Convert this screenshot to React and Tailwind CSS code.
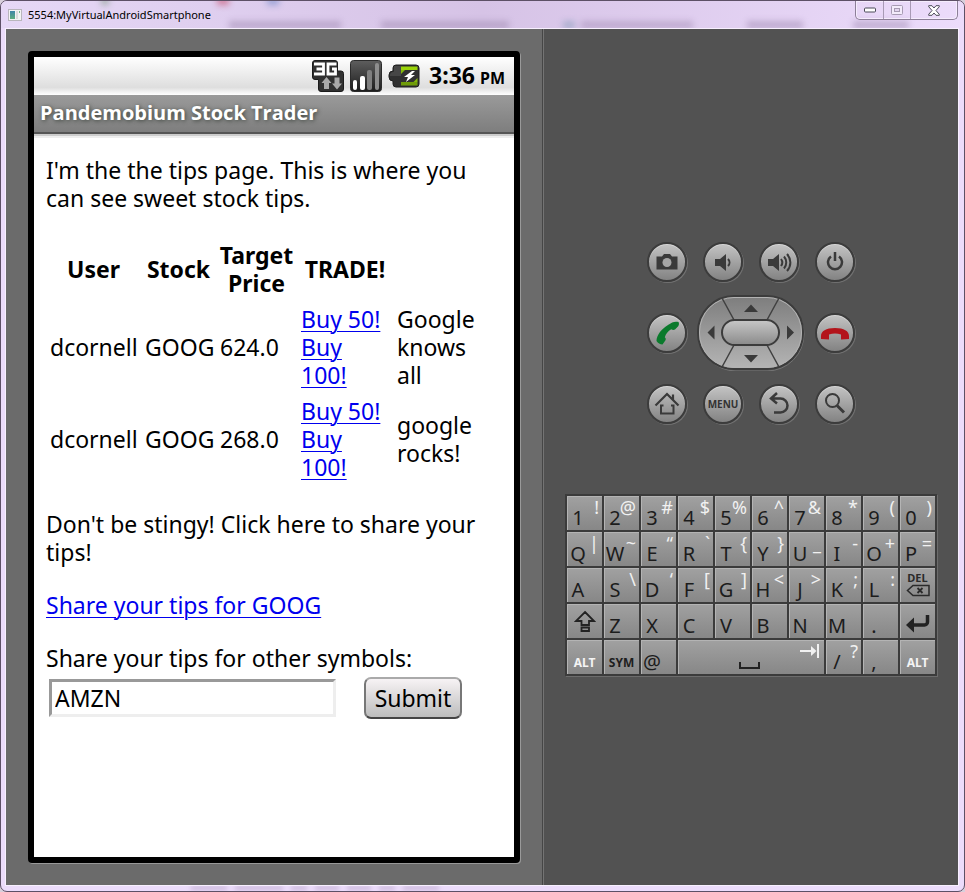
import React from "react";

const droid = "font-['Noto_Sans','Open_Sans',sans-serif]";
const droidWide = "font-['Open_Sans','Noto_Sans',sans-serif]";

function AppIcon() {
  return (
    <svg width="14" height="14" viewBox="0 0 14 14" aria-hidden="true">
      <defs>
        <linearGradient id="app" x1="0" y1="0" x2="0" y2="1">
          <stop offset="0" stopColor="#3f86a8" />
          <stop offset="1" stopColor="#5fae7e" />
        </linearGradient>
      </defs>
      <rect x="0.5" y="1.5" width="13" height="11" fill="#f4f4f4" stroke="#b9b6bd" />
      <rect x="2" y="3" width="5" height="8" fill="url(#app)" />
      <rect x="8" y="3" width="2" height="8" fill="#dcdcdc" />
      <rect x="11" y="3" width="1" height="2" fill="#7cb98c" />
    </svg>
  );
}

function TitleBar() {
  return (
    <header className="relative flex h-[27px] items-start justify-between overflow-hidden bg-linear-to-r from-[#e6d8f6] via-[#d6c3e6] to-[#ecdcfb]">
      <div aria-hidden="true" className="absolute inset-0 opacity-50 blur-[3px]">
        <div className="absolute top-[20px] left-[228px] h-2 w-28 bg-[#9c86ad]" />
        <div className="absolute top-[20px] left-[380px] h-2 w-32 bg-[#9c86ad]" />
        <div className="absolute top-[20px] left-[562px] h-2 w-3 bg-[#7f97b4]" />
        <div className="absolute top-[20px] left-[580px] h-2 w-28 bg-[#a28cb3]" />
        <div className="absolute top-[20px] left-[746px] h-2 w-14 bg-[#9c86ad]" />
        <div className="absolute top-[20px] left-[852px] h-2 w-14 bg-[#9c86ad]" />
        <div className="absolute -top-1 left-[216px] h-2 w-3 bg-[#c2304f]" />
        <div className="absolute -top-1 left-[100px] h-2 w-2 bg-[#6a8f6a]" />
        <div className="absolute -top-1 left-[266px] h-2 w-3 bg-[#5a7ac0]" />
      </div>
      <div className="relative flex h-[27px] items-center gap-[6px] pl-[7px]">
        <AppIcon />
        <h1 className={`${droid} text-[11px] leading-4 text-black`}>5554:MyVirtualAndroidSmartphone</h1>
      </div>
      <div className="relative mr-[6px] flex h-[19px] rounded-b-[5px] border border-t-0 border-[#8c7f98] shadow-[inset_0_0_0_1px_#f5ecfd]">
        <button type="button" aria-label="Minimize" className="flex w-7 items-center justify-center border-r border-[#a89ab5]">
          <svg width="12" height="6" viewBox="0 0 12 6"><rect x="0.5" y="1" width="11" height="4" rx="1" fill="#fff" stroke="#4b4a58" /></svg>
        </button>
        <button type="button" aria-label="Maximize" className="flex w-[27px] items-center justify-center border-r border-[#a89ab5]">
          <svg width="12" height="10" viewBox="0 0 12 10" fill="#f3ebfb" stroke="#a79bb3"><rect x="0.5" y="0.5" width="11" height="9" rx="1" /><rect x="3.5" y="3.5" width="5" height="3" fill="#e3d5f0" /></svg>
        </button>
        <button type="button" aria-label="Close" className="flex w-[46px] items-center justify-center">
          <svg width="12" height="11" viewBox="0 0 12 11"><path d="M.7.7H4L6 3l2-2.3h3.3v1L8 5.5l3.3 3.8v1H8L6 8l-2 2.300H.7v-1L4 5.500.7 1.700z" fill="#fff" stroke="#4b4a58" /></svg>
        </button>
      </div>
    </header>
  );
}

function StatusBar() {
  return (
    <div className="flex h-[38px] items-center justify-end gap-[6px] bg-linear-to-b from-white via-[#dedede] via-80% to-white pr-[9px]">
      <svg width="32" height="32" viewBox="0 0 32 32" role="img" aria-label="3G data">
        <path d="M3 .5h20a2.500 2.500 0 0 1 2.500 2.500v8h3.500a2.500 2.500 0 0 1 2.500 2.500V29a2.500 2.500 0 0 1-2.500 2.500H9A2.500 2.500 0 0 1 6.500 29v-9.500H3A2.500 2.500 0 0 1 .5 17V3A2.500 2.500 0 0 1 3 .5z" fill="#303030" stroke="#1b1b1b" />
        <path d="M2 4h9.500v10H2M4.500 9h7M24.500 4H16v10h7.500V9H20" fill="none" stroke="#fff" strokeWidth="2.800" />
        <path d="M14.500 17l5 6H17v6h-5v-6H9.500zM25 29.500l-5-6h2.500v-6h5v6H30z" fill="#a9a9a9" />
      </svg>
      <svg width="32" height="32" viewBox="0 0 32 32" role="img" aria-label="Signal strength">
        <defs><linearGradient id="sig" x1="0" y1="0" x2="0" y2="1"><stop offset="0" stopColor="#5e5e5e" /><stop offset="1" stopColor="#1c1c1c" /></linearGradient></defs>
        <rect x=".5" y=".5" width="31" height="31" rx="3" fill="url(#sig)" stroke="#2b2b2b" />
        <rect x="3" y="20" width="4" height="10" rx="2" fill="#fff" />
        <rect x="10" y="16" width="5" height="14" rx="2" fill="#fff" />
        <rect x="17" y="10" width="5" height="20" rx="2" fill="#808080" />
        <rect x="25" y="3" width="4" height="27" rx="2" fill="#8e8e8e" />
      </svg>
      <svg width="32" height="24" viewBox="0 0 32 24" role="img" aria-label="Battery charging">
        <path d="M8 1h20a3 3 0 0 1 3 3v16a3 3 0 0 1-3 3H8a3 3 0 0 1-3-3v-3a4 4 0 0 1-4-4v-2a4 4 0 0 1 4-4V4a3 3 0 0 1 3-3z" fill="#303030" stroke="#1f1f1f" />
        <path d="M6 2h7v10H2c0-3 1-4 4-4z" fill="#555" opacity=".6" />
        <path d="M13 2.500h16.500V6H13z" fill="#9ad30a" />
        <path d="M13 18h16.500v3.500H13z" fill="#6f9c08" />
        <path d="M13 6h4l-4 4zM29.500 18h-4l4-4z" fill="#84b80a" />
        <path d="M24 7l-8 6h4l-2 5 9-7h-4l4-4z" fill="#fff" />
      </svg>
      <time className="flex items-baseline gap-[5px] pl-[3px] font-['Noto_Sans',sans-serif] text-[23px] leading-[38px] font-bold text-black">
        3:36 <span className="text-[16px]">PM</span>
      </time>
    </div>
  );
}

const tips = [
  { user: "dcornell", stock: "GOOG", price: "624.0", note: "Google knows all" },
  { user: "dcornell", stock: "GOOG", price: "268.0", note: "google rocks!" },
];
const linkClass = "text-[#0000ee] underline decoration-1 underline-offset-3";

function Page() {
  return (
    <main className={`${droid} flex flex-col gap-[25px] px-3 pt-[22px] text-[23px] leading-7 text-black`}>
      <p>I'm the the tips page. This is where you<br />can see sweet stock tips.</p>
      <table className="w-full table-fixed border-collapse">
        <colgroup>
          <col className="w-[95px]" /><col className="w-[75px]" /><col className="w-[81px]" /><col className="w-[96px]" /><col />
        </colgroup>
        <thead>
          <tr className="whitespace-nowrap">
            <th className="py-1">User</th>
            <th className="py-1">Stock</th>
            <th className="py-1">Target<br />Price</th>
            <th className="py-1">TRADE!</th>
            <td />
          </tr>
        </thead>
        <tbody>
          {tips.map((t) => (
            <tr key={t.price}>
              <td className="px-1 py-1 whitespace-nowrap">{t.user}</td>
              <td className="px-1 py-1 whitespace-nowrap">{t.stock}</td>
              <td className="px-1 py-1">{t.price}</td>
              <td className="py-1 pl-1">
                <a href="#buy50" className={linkClass}>Buy 50!</a><br />
                <a href="#buy100" className={linkClass}>Buy<br />100!</a>
              </td>
              <td className="py-1 pr-6 pl-1">{t.note}</td>
            </tr>
          ))}
        </tbody>
      </table>
      <p>Don't be stingy! Click here to share your<br />tips!</p>
      <p><a href="#share" className={linkClass}>Share your tips for GOOG</a></p>
      <form onSubmit={(e) => e.preventDefault()}>
        <label htmlFor="symbol" className="block">Share your tips for other symbols:</label>
        <div className="flex items-center gap-7 pt-[5px] pl-[3px]">
          <input id="symbol" defaultValue="AMZN" className="h-[38px] w-[287px] border-3 border-t-[#999] border-r-[#eee] border-b-[#eee] border-l-[#999] bg-white px-[3px] outline-none" />
          <button type="submit" className="h-[42px] w-[98px] rounded-[7px] border-2 border-t-[#aaa] border-r-[#777] border-b-[#444] border-l-[#777] bg-linear-to-b from-[#f7f3f5] to-[#bdbdbd]">Submit</button>
        </div>
      </form>
    </main>
  );
}

function Phone() {
  return (
    <section aria-label="Phone screen" className="flex w-[492px] shrink-0 flex-col rounded-[4px] border-6 border-black bg-white shadow-[1px_1px_0_#999]">
      <StatusBar />
      <div className="h-[39px] border-b-2 border-[#555] bg-linear-to-b from-[#9a9a9a] to-[#7e7e7e] pl-[6px] shadow-[0_2px_0_#ccc,0_4px_0_#eee]">
        <h2 className={`${droidWide} text-[20px] leading-9 font-bold text-white [text-shadow:1px_1px_4px_#3b423b]`}>Pandemobium Stock Trader</h2>
      </div>
      <Page />
    </section>
  );
}

function Round({ label, children }) {
  return (
    <button type="button" aria-label={label} className="flex size-10 items-center justify-center rounded-full border-2 border-[#3c3c3c] bg-linear-to-b from-[#c4c4c4] to-[#838383] shadow-[1px_1px_0_#717171,inset_0_1px_0_#d8d8d8]">
      {children}
    </button>
  );
}

function Icon({ children }) {
  return (
    <svg width="28" height="28" viewBox="0 0 28 28" fill="none" stroke="#3a3a3a" strokeWidth="2" className="shrink-0" aria-hidden="true">
      {children}
    </svg>
  );
}

function DPad() {
  return (
    <svg width="108" height="76" viewBox="0 0 108 76" role="group" aria-label="Direction pad" className="col-span-2">
      <defs>
        <linearGradient id="pad" x1="0" y1="0" x2="0" y2="1"><stop offset="0" stopColor="#7d7d7d" /><stop offset="1" stopColor="#b5b5b5" /></linearGradient>
        <linearGradient id="ok" x1="0" y1="0" x2="0" y2="1"><stop offset="0" stopColor="#c8c8c8" /><stop offset="1" stopColor="#8a8a8a" /></linearGradient>
      </defs>
      <rect x="2" y="2" width="105" height="74" rx="37" fill="none" stroke="#747474" />
      <rect x="1" y="1" width="105" height="73" rx="36" fill="url(#pad)" stroke="#3c3c3c" strokeWidth="2" />
      <rect x="2.500" y="2.500" width="102" height="70" rx="34.500" fill="none" stroke="#b3b3b3" />
      <path d="M25 3l12 22M82 3L70 25M25 72l12-22M82 72L70 50" stroke="#404040" strokeWidth="1.500" />
      <rect x="25" y="25" width="57" height="25" rx="12.500" fill="url(#ok)" stroke="#3c3c3c" strokeWidth="2" />
      <path d="M54 9.500l7 7.500H47zM54 67.500l7-7.500H47zM10.500 37.500l7-7v14zM97 37.500l-7-7v14z" fill="#3a3a3a" />
    </svg>
  );
}

function Controls() {
  return (
    <div className="grid auto-rows-[71px] grid-cols-[repeat(4,56px)] place-items-center">
      <Round label="Camera">
        <Icon><path d="M3.500 8.500H9L11 6h6l2 2.500h5.500v13h-21z" fill="#3a3a3a" stroke="none" /><circle cx="14" cy="14.500" r="4.500" fill="#a6a6a6" stroke="none" /></Icon>
      </Round>
      <Round label="Volume down">
        <Icon><path d="M6 11h5l6-5v17l-6-5H6z" fill="#3a3a3a" stroke="none" /><path d="M19 11c2 2 2 5 0 7" /></Icon>
      </Round>
      <Round label="Volume up">
        <Icon><path d="M3 11h5l6-5v17l-6-5H3z" fill="#3a3a3a" stroke="none" /><path d="M16 11c1.500 2 1.500 5 0 7M19 8.500c3 3.500 3 8.500 0 12M22 6c4.500 5 4.500 12 0 17" /></Icon>
      </Round>
      <Round label="Power">
        <Icon><path d="M10 8.500a7 7 0 1 0 8 0M14 4v9" strokeWidth="2.500" /></Icon>
      </Round>
      <Round label="Call">
        <Icon><path d="M15 6C19 3 22 2 25.500 3c.8 1.500.5 3-.3 4.200L22 10.500c-1.500.8-2.800.3-3.800-.3-3.200 1.800-5.400 4.600-6.400 8 1 .8 1.200 1.800.7 3L9.500 25.500c-2.500 0-4.500-1.500-6-3.500C3.500 16 9 9.500 15 6z" fill="#0a7a2c" stroke="none" /></Icon>
      </Round>
      <DPad />
      <Round label="End call">
        <Icon><path d="M0 17c0-5 5-8 14-8s14 3 14 8v3l-8 .5v-5c-4-1.500-8-1.500-12 0v5L0 20z" fill="#b3141b" stroke="none" /></Icon>
      </Round>
      <Round label="Home">
        <Icon><path d="M2.500 15.500L14 4l11.500 11.500M20 9.500V4.500" strokeWidth="2.200" /><path d="M10.500 15.500H8v8h12.500v-8H18" /></Icon>
      </Round>
      <Round label="Menu">
        <span className={`${droidWide} text-[10px] leading-4 font-bold text-[#333]`}>MENU</span>
      </Round>
      <Round label="Back">
        <Icon><path d="M12 3L6 8.500l6 5M6 8.500h9.500a7 7 0 0 1 0 14H9" strokeWidth="2.500" /></Icon>
      </Round>
      <Round label="Search">
        <Icon><circle cx="11.500" cy="10.500" r="6.500" /><path d="M16 15.500l7 7" strokeWidth="3" /></Icon>
      </Round>
    </div>
  );
}

const rows = [
  ["1!", "2@", "3#", "4$", "5%", "6^", "7&", "8*", "9(", "0)"],
  ["Q|", "W~", "E“", "R`", "T{", "Y}", "U_", "I-", "O+", "P="],
  ["A", "S\\", "D‘", "F[", "G]", "H<", "J>", "K;", "L:", "DEL"],
  ["SHIFT", "Z", "X", "C", "V", "B", "N", "M", ".", "ENTER"],
  ["ALT", "SYM", "@", "SPACE", "/?", ",", "ALT"],
];
const keyBase = "flex h-[34px] bg-linear-to-b from-[#a1a1a1] to-[#878787] shadow-[inset_1px_1px_0_#b4b4b4]";

function Key({ k }) {
  if (k === "ALT") return <button type="button" className={`${keyBase} items-center justify-center pt-3 text-[12px] leading-4 font-bold text-[#f4f4f4]`}>ALT</button>;
  if (k === "SYM") return <button type="button" className={`${keyBase} items-center justify-center pt-3 text-[12px] leading-4 font-bold text-[#1e1e1e]`}>SYM</button>;
  if (k === "DEL")
    return (
      <button type="button" className={`${keyBase} flex-col items-center pt-1 text-[11px] leading-3 font-bold text-[#2a2a2a]`}>
        DEL
        <svg width="24" height="13" viewBox="0 0 24 13" fill="none" stroke="#2a2a2a" strokeWidth="1.500" aria-hidden="true"><path d="M7 1.500h16v10H7L1.500 6.500z" /><path d="M11.500 4l5 5M16.500 4l-5 5" strokeWidth="1.800" /></svg>
      </button>
    );
  if (k === "SHIFT")
    return (
      <button type="button" aria-label="Shift" className={`${keyBase} items-center justify-center`}>
        <svg width="22" height="22" viewBox="0 0 22 22" fill="none" stroke="#222" strokeWidth="1.800" aria-hidden="true"><path d="M11 2l9 9h-5v4H7.500v-4H2zM7.500 17.500H15V21H7.500z" /></svg>
      </button>
    );
  if (k === "ENTER")
    return (
      <button type="button" aria-label="Enter" className={`${keyBase} items-center justify-center pt-1`}>
        <svg width="26" height="20" viewBox="0 0 26 20" aria-hidden="true"><path d="M8 12h11.500a3 3 0 0 0 3-3V2" fill="none" stroke="#222" strokeWidth="3.500" /><path d="M1 12l8-7.500v15z" fill="#222" /></svg>
      </button>
    );
  if (k === "SPACE")
    return (
      <button type="button" aria-label="Space" className={`${keyBase} col-span-4 items-end justify-end pr-1`}>
        <svg width="84" height="34" viewBox="0 0 84 34" fill="none" aria-hidden="true"><path d="M4 22v6h19v-6" stroke="#222" strokeWidth="2" /><path d="M64 11h14M82 4v14" stroke="#f1f1f1" strokeWidth="2" /><path d="M75 6l5.500 5-5.500 5z" fill="#f1f1f1" /></svg>
      </button>
    );
  return (
    <button type="button" className={`${keyBase} justify-between pr-[3px]`}>
      <span className="w-[22px] shrink-0 self-end text-center text-[20px] leading-6 text-[#1c1c1c]">{k[0]}</span>
      {k[1] && <span className="flex w-0 justify-end self-start text-[18px] leading-[22px] text-[#f1f1f1]">{k[1]}</span>}
    </button>
  );
}

function Keyboard() {
  return (
    <div className={`${droid} grid grid-cols-[repeat(10,35px)] gap-[2px] bg-[#3b3b3b] p-[2px] shadow-[1px_1px_0_#6c6c6c]`}>
      {rows.flatMap((r, i) => r.map((k, j) => <Key key={`${i}-${j}`} k={k} />))}
    </div>
  );
}

function BottomFrame() {
  return (
    <div aria-hidden="true" className="flex h-[5px] gap-2 overflow-hidden pl-[190px] opacity-60">
      <div className="h-1 w-9 bg-[#b7a2c8] blur-[2px]" />
      <div className="h-1 w-12 bg-[#b7a2c8] blur-[2px]" />
      <div className="h-1 w-4 bg-[#b7a2c8] blur-[2px]" />
      <div className="h-1 w-6 bg-[#b7a2c8] blur-[2px]" />
      <div className="h-1 w-6 bg-[#b7a2c8] blur-[2px]" />
      <div className="h-1 w-4 bg-[#b7a2c8] blur-[2px]" />
      <div className="h-1 w-9 bg-[#b7a2c8] blur-[2px]" />
    </div>
  );
}

export default function App() {
  return (
    <div className="min-h-screen bg-[#d8d0dc]">
      <div className="flex min-h-screen flex-col overflow-hidden rounded-[7px] border border-[#5d5066] bg-[#ecdcfb]">
        <TitleBar />
        <div className="mr-[5px] ml-1 flex flex-1 border border-[#f8f0ff]">
          <div className="flex border-r border-[#464646] bg-[#6b6b6b] px-[22px] py-[22px]">
            <Phone />
          </div>
          <div className="flex flex-1 flex-col items-center justify-center gap-[54px] border-l border-[#747474] bg-[#525252] pb-3">
            <Controls />
            <Keyboard />
          </div>
        </div>
        <BottomFrame />
      </div>
    </div>
  );
}
